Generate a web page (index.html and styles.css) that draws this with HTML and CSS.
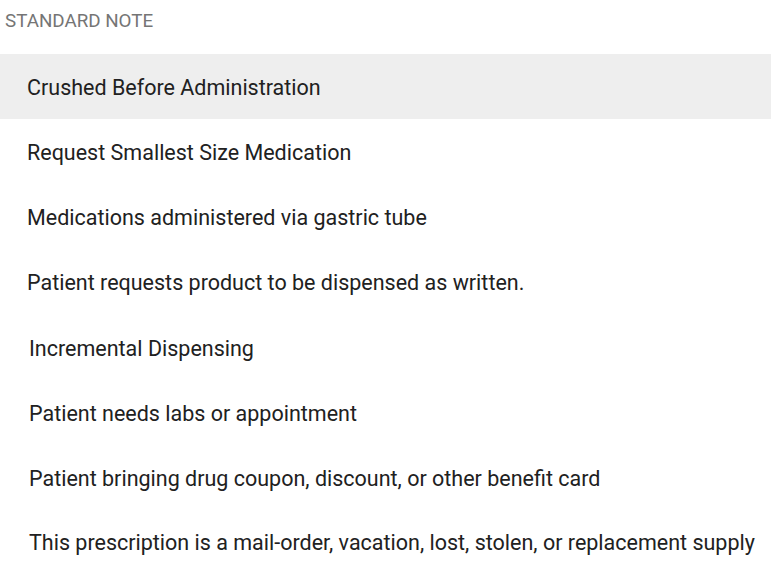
FILE: index.html
```html
<!DOCTYPE html>
<html>
<head>
    <meta charset="UTF-8">
    <title>Standard Note</title>
    <link rel="stylesheet" href="styles.css">
</head>
<body>
    <div class="panel">
        <div class="panel-title">STANDARD NOTE</div>
        <ul class="note-list">
            <li class="note-item active">Crushed Before Administration</li>
            <li class="note-item">Request Smallest Size Medication</li>
            <li class="note-item">Medications administered via gastric tube</li>
            <li class="note-item">Patient requests product to be dispensed as written.</li>
        </ul>
        <ul class="note-list extra">
            <li class="note-item">Incremental Dispensing</li>
            <li class="note-item">Patient needs labs or appointment</li>
            <li class="note-item">Patient bringing drug coupon, discount, or other benefit card</li>
            <li class="note-item">This prescription is a mail-order, vacation, lost, stolen, or replacement supply</li>
        </ul>
    </div>
</body>
</html>
```

FILE: styles.css
```css
body {
    margin: 0;
    background: #ffffff;
    font-family: Roboto, 'Noto Sans', sans-serif;
    color: #212121;
}

.panel {
    width: 771px;
}

.panel-title {
    height: 54px;
    box-sizing: border-box;
    padding: 10px 0 0 5px;
    font-size: 18.8px;
    line-height: 22px;
    color: #757575;
}

.note-list {
    list-style: none;
    margin: 0;
    padding: 0;
}

.note-item {
    height: 65px;
    box-sizing: border-box;
    padding: 2px 0 0 27px;
    display: flex;
    align-items: center;
    font-size: 21.5px;
    line-height: 24px;
}

.note-item.active {
    background: #eeeeee;
}

.note-list.extra {
    margin-top: 1px;
}

.note-list.extra .note-item {
    padding-left: 29px;
}

.note-list.extra .note-item:last-child {
    height: 63px;
}
```
